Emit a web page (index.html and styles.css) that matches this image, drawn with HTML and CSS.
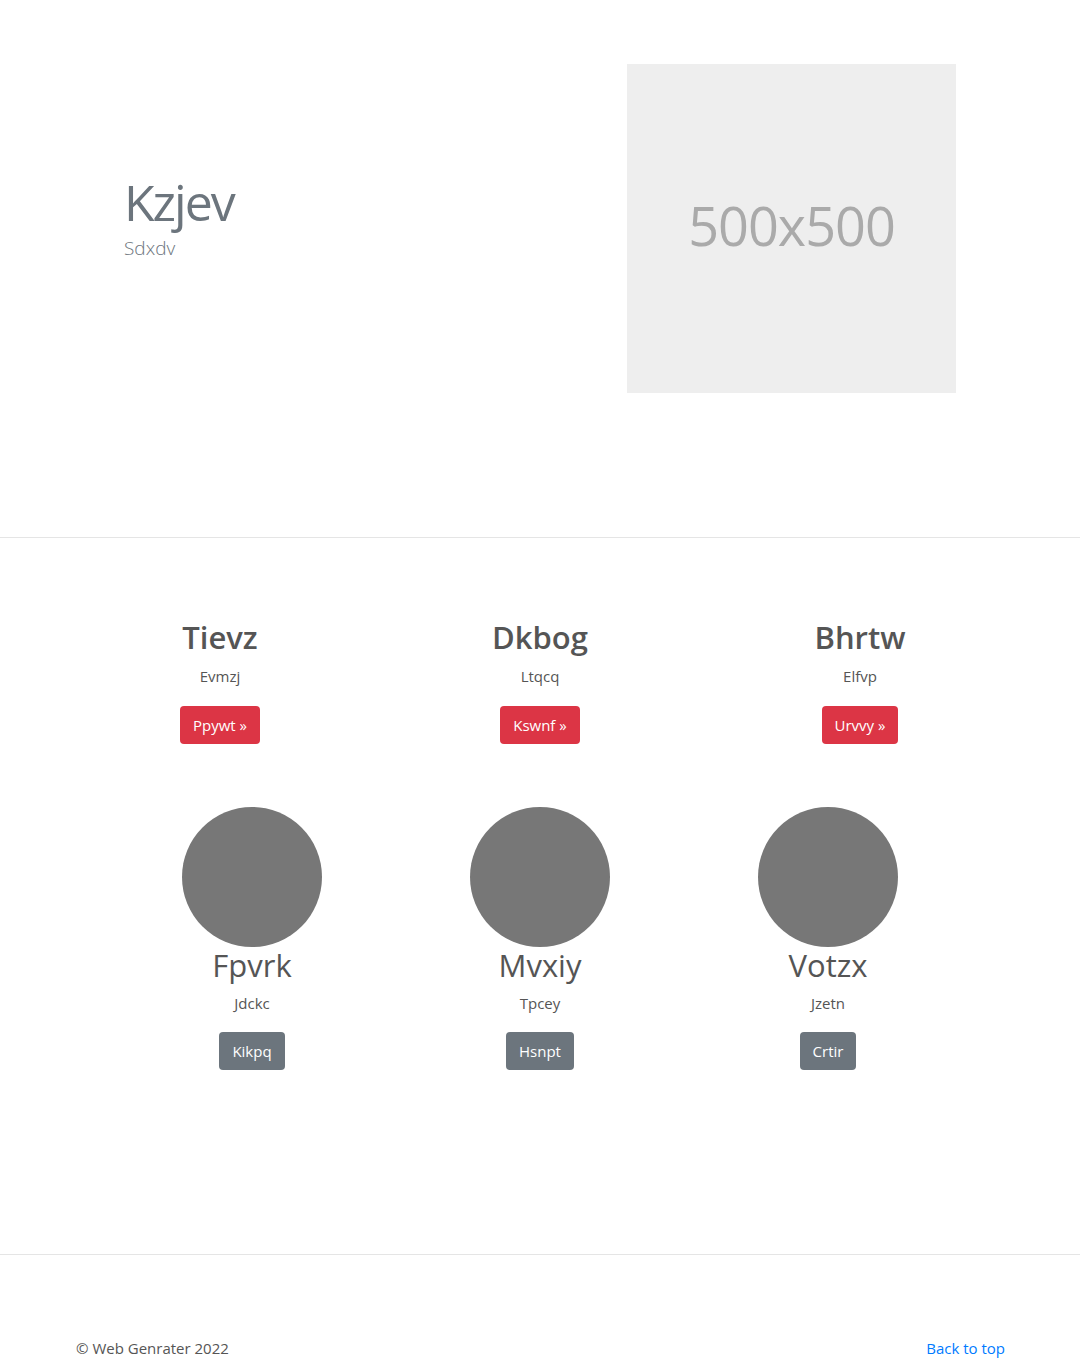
FILE: index.html
```html
<!DOCTYPE html>
<html lang="en">
<head>
<meta charset="utf-8">
<title>Kzjev</title>
<link rel="stylesheet" href="styles.css">
</head>
<body>
<section class="hero">
  <div class="container hero-row">
    <div class="hero-text">
      <h1 class="hero-title">Kzjev</h1>
      <p class="hero-lead">Sdxdv</p>
    </div>
    <div class="placeholder"><span>500x500</span></div>
  </div>
</section>

<section class="content">
  <div class="container">
    <div class="features">
      <div class="feature">
        <h2 class="feature-title">Tievz</h2>
        <p class="feature-text">Evmzj</p>
        <a class="btn btn-red" href="#">Ppywt »</a>
      </div>
      <div class="feature">
        <h2 class="feature-title">Dkbog</h2>
        <p class="feature-text">Ltqcq</p>
        <a class="btn btn-red" href="#">Kswnf »</a>
      </div>
      <div class="feature">
        <h2 class="feature-title">Bhrtw</h2>
        <p class="feature-text">Elfvp</p>
        <a class="btn btn-red" href="#">Urvvy »</a>
      </div>
    </div>
    <div class="people">
      <div class="person">
        <div class="avatar"></div>
        <h2 class="person-name">Fpvrk</h2>
        <p class="person-text">Jdckc</p>
        <a class="btn btn-grey" href="#">Kikpq</a>
      </div>
      <div class="person">
        <div class="avatar"></div>
        <h2 class="person-name">Mvxiy</h2>
        <p class="person-text">Tpcey</p>
        <a class="btn btn-grey" href="#">Hsnpt</a>
      </div>
      <div class="person">
        <div class="avatar"></div>
        <h2 class="person-name">Votzx</h2>
        <p class="person-text">Jzetn</p>
        <a class="btn btn-grey" href="#">Crtir</a>
      </div>
    </div>
  </div>
</section>

<footer class="footer">
  <div class="container footer-row">
    <p class="copy">© Web Genrater 2022</p>
    <a class="back" href="#">Back to top</a>
  </div>
</footer>
</body>
</html>
```

FILE: styles.css
```css
* { box-sizing: border-box; }
html, body { margin: 0; padding: 0; }
body {
  font-family: "Open Sans", "Noto Sans", "Liberation Sans", sans-serif;
  font-size: 16px;
  line-height: 1.5;
  color: #212529;
  background: #fff;
}
.container {
  width: 960px;
  margin: 0 auto;
  padding: 0 15px;
}
.hero {
  height: 538px;
  padding-top: 64px;
  border-bottom: 1px solid #e5e5e5;
}
.hero-row {
  display: flex;
  align-items: center;
}
.hero-text {
  padding-left: 49px;
  padding-bottom: 24px;
}
.hero-title {
  margin: 0;
  font-size: 50px;
  font-weight: 400;
  line-height: 61px;
  color: #6c757d;
  letter-spacing: -2px;
}
.hero-lead {
  margin: 0;
  padding-top: 2px;
  font-size: 19px;
  font-weight: 300;
  line-height: 1.4;
  color: #6c757d;
}
.placeholder {
  margin-left: auto;
  margin-right: 49px;
  width: 329px;
  height: 329px;
  background: #eee;
  display: flex;
  align-items: center;
  justify-content: center;
}
.placeholder span {
  font-size: 54px;
  color: #aaa;
  letter-spacing: -1px;
  margin-top: -6px;
}
.content {
  height: 717px;
  border-bottom: 1px solid #e5e5e5;
  padding-top: 81px;
}
.features {
  display: grid;
  grid-template-columns: repeat(3, 1fr);
  margin: 0 -15px;
}
.feature, .person {
  text-align: center;
  display: flex;
  flex-direction: column;
  align-items: center;
}
.feature-title {
  margin: 0 0 9px;
  font-size: 31px;
  font-weight: 600;
  line-height: 1.2;
  color: #555;
}
.feature-text, .person-text {
  margin: 0 0 18px;
  font-size: 15px;
  color: #555;
}
.btn {
  display: inline-block;
  padding: 7px 13px;
  font-size: 15px;
  line-height: 24px;
  color: #fff;
  text-decoration: none;
  border-radius: 4px;
}
.btn-red { background: #dc3545; }
.btn-grey { background: #6c757d; }
.people {
  display: grid;
  grid-template-columns: repeat(3, 1fr);
  margin-top: 63px;
  padding: 0 33px;
}
.avatar {
  width: 140px;
  height: 140px;
  border-radius: 50%;
  background: #777;
}
.person-name {
  margin: 0 0 8px;
  font-size: 31px;
  font-weight: 400;
  line-height: 1.2;
  color: #555;
}
.footer {
  padding-top: 82px;
}
.footer-row {
  display: flex;
  justify-content: space-between;
  align-items: baseline;
}
.copy {
  margin: 0;
  color: #555;
  font-size: 15px;
  padding-left: 1px;
}
.back {
  color: #007bff;
  text-decoration: none;
  font-size: 15px;
}
```
